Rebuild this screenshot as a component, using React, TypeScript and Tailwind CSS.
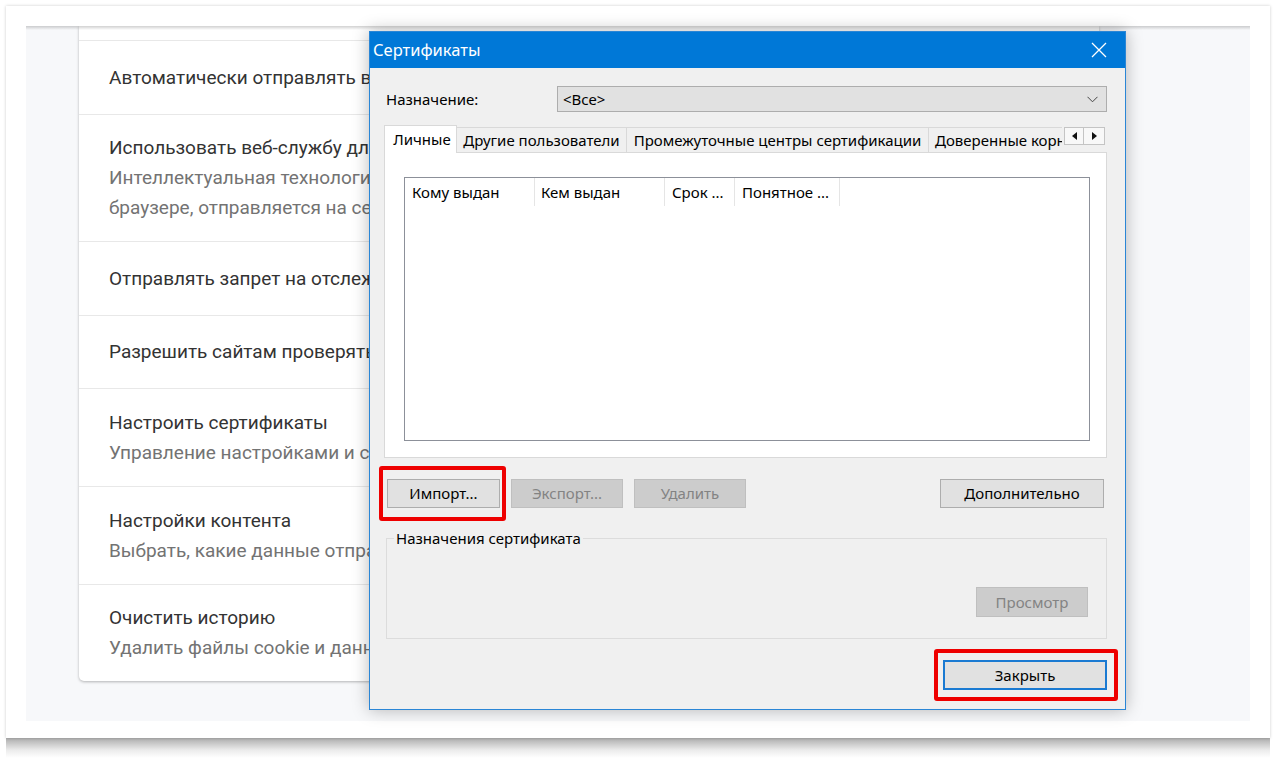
import React from "react";

type Row = { title: string; sub?: string[]; h: string };

const rows: Row[] = [
  { h: "h-[74px]", title: "Автоматически отправлять в Google некоторые системные данные и содержание страниц" },
  {
    h: "h-[127px]",
    title: "Использовать веб-службу для проверки правописания",
    sub: [
      "Интеллектуальная технология проверки правописания, используемая в Google Поиске. Текст, введенный в",
      "браузере, отправляется на серверы Google.",
    ],
  },
  { h: "h-[74px]", title: "Отправлять запрет на отслеживание с исходящим трафиком" },
  { h: "h-[73px]", title: "Разрешить сайтам проверять, сохранены ли в браузере данные о способах оплаты" },
  { h: "h-[98px]", title: "Настроить сертификаты", sub: ["Управление настройками и сертификатами HTTPS/SSL"] },
  {
    h: "h-[98px]",
    title: "Настройки контента",
    sub: ["Выбрать, какие данные отправлять сайтам и какой контент показывать на веб-страницах"],
  },
  { h: "h-[96px]", title: "Очистить историю", sub: ["Удалить файлы cookie и данные сайтов, очистить историю и кеш"] },
];

function SettingsRow({ row, last }: { row: Row; last: boolean }) {
  return (
    <div
      className={`flex ${row.h} flex-col justify-center px-[30px] leading-[30px] ${
        last ? "" : "border-b border-[#e8e8e8]"
      }`}
    >
      <div className="whitespace-nowrap text-[19px] text-[#333333]">{row.title}</div>
      {row.sub?.map((s, i) => (
        <div key={i} className="whitespace-nowrap text-[19px] text-[#737373]">
          {s}
        </div>
      ))}
    </div>
  );
}

function WinButton({
  label,
  width,
  disabled,
  def,
  h = 29,
}: {
  label: string;
  width: string;
  disabled?: boolean;
  def?: boolean;
  h?: number;
}) {
  const base = "flex items-center justify-center text-[15px] leading-none";
  const size = h === 30 ? "h-[30px]" : "h-[29px]";
  if (disabled) {
    return (
      <div className={`${base} ${size} ${width} border border-[#bfbfbf] bg-[#cccccc] text-[#838383]`}>
        {label}
      </div>
    );
  }
  if (def) {
    return (
      <div className={`${base} ${size} ${width} border-2 border-[#1a7ad2] bg-[#e1e1e1] text-black`}>
        {label}
      </div>
    );
  }
  return (
    <div className={`${base} ${size} ${width} border border-[#adadad] bg-[#e1e1e1] text-black`}>{label}</div>
  );
}

function Dialog() {
  return (
    <div className="absolute left-[369px] top-[31px] w-[757px] border border-[#2a86d6] bg-[#f0f0f0] font-['Noto_Sans',sans-serif] shadow-[0_0_16px_rgba(0,0,0,0.28)]">
      {/* title bar */}
      <div className="flex h-[36px] items-center justify-between bg-[#0078d7] pl-[3px] pr-[18px]">
        <span className="text-[16.5px] text-white">Сертификаты</span>
        <svg width="16" height="16" viewBox="0 0 16 16">
          <path d="M1 1 L15 15 M15 1 L1 15" stroke="white" strokeWidth="1.3" fill="none" />
        </svg>
      </div>

      <div className="flex flex-col pl-[14px] pr-[18px] pb-[19px] text-black">
        {/* purpose row */}
        <div className="mt-[18px] flex items-center">
          <div className="w-[173px] pl-[2px] text-[15px]">Назначение:</div>
          <div className="flex h-[26px] flex-1 items-center justify-between border border-[#adadad] bg-[#e1e1e1] pl-[5px] pr-[8px] text-[15px]">
            <span>&lt;Все&gt;</span>
            <svg width="11" height="7" viewBox="0 0 11 7">
              <polyline points="0.5,0.8 5.5,5.8 10.5,0.8" stroke="#444" strokeWidth="1" fill="none" />
            </svg>
          </div>
        </div>

        {/* tabs */}
        <div className="mt-[13px] flex h-[27px] items-end text-[15px]">
          <div className="relative z-10 -mb-px flex h-[28px] w-[73px] items-center justify-center border border-b-0 border-[#d9d9d9] bg-white pl-[3px]">
            Личные
          </div>
          <div className="flex h-[25px] w-[170px] items-center justify-center border-t border-r border-[#d9d9d9] bg-[#f0f0f0]">
            Другие пользователи
          </div>
          <div className="flex h-[25px] w-[302px] items-center justify-center border-t border-r border-[#d9d9d9] bg-[#f0f0f0]">
            Промежуточные центры сертификации
          </div>
          <div className="flex h-[25px] w-[133px] items-center overflow-hidden whitespace-nowrap border-t border-[#d9d9d9] bg-[#f0f0f0] pl-[6px]">
            Доверенные корневые центры сертификации
          </div>
          <div className="mb-[7px] ml-[2px] flex gap-0">
            <div className="flex h-[18px] w-[20px] items-center justify-center border border-[#c4c4c4] bg-[#f8f8f8]">
              <svg width="5" height="8" viewBox="0 0 5 8">
                <polygon points="5,0 5,8 0,4" fill="#111" />
              </svg>
            </div>
            <div className="flex h-[18px] w-[21px] items-center justify-center border border-l-0 border-[#c4c4c4] bg-[#f8f8f8]">
              <svg width="5" height="8" viewBox="0 0 5 8">
                <polygon points="0,0 0,8 5,4" fill="#111" />
              </svg>
            </div>
          </div>
        </div>

        {/* tab pane */}
        <div className="h-[306px] border border-[#d9d9d9] bg-white pl-[19px] pr-[16px] pt-[24px] pb-[16px]">
          <div className="h-full border border-[#8c9099] bg-white">
            <div className="flex h-[28px] items-stretch text-[15px]">
              <div className="flex w-[130px] items-center border-r border-[#e5e5e5] pl-[7px]">Кому выдан</div>
              <div className="flex w-[130px] items-center border-r border-[#e5e5e5] pl-[6px]">Кем выдан</div>
              <div className="flex w-[70px] items-center border-r border-[#e5e5e5] pl-[7px]">Срок ...</div>
              <div className="flex w-[105px] items-center border-r border-[#e5e5e5] pl-[7px]">Понятное ...</div>
            </div>
          </div>
        </div>

        {/* buttons row */}
        <div className="mt-[21px] flex items-center">
          <div className="relative ml-[3px]">
            <WinButton label="Импорт..." width="w-[113px]" />
            <div className="pointer-events-none absolute -left-[8px] -right-[6px] -top-[13px] -bottom-[13px] rounded-[3px] border-4 border-[#ee0000]" />
          </div>
          <div className="ml-[11px]">
            <WinButton label="Экспорт..." width="w-[112px]" disabled />
          </div>
          <div className="ml-[11px]">
            <WinButton label="Удалить" width="w-[112px]" disabled />
          </div>
          <div className="ml-auto mr-[3px]">
            <WinButton label="Дополнительно" width="w-[164px]" />
          </div>
        </div>

        {/* group box */}
        <fieldset className="mt-[20px] ml-[2px] border border-[#dcdcdc] pl-[7px] pr-[18px] pb-[21px]">
          <legend className="px-[2px] text-[15px] leading-[20px]">Назначения сертификата</legend>
          <div className="mt-[39px] flex justify-end">
            <WinButton label="Просмотр" width="w-[112px]" disabled h={30} />
          </div>
        </fieldset>

        {/* close */}
        <div className="mt-[21px] flex justify-end">
          <div className="relative">
            <WinButton label="Закрыть" width="w-[164px]" def h={30} />
            <div className="pointer-events-none absolute -left-[9px] -right-[11px] -top-[11px] -bottom-[11px] rounded-[3px] border-4 border-[#ee0000]" />
          </div>
        </div>
      </div>
    </div>
  );
}

export default function App() {
  return (
    <div className="relative h-[771px] w-[1284px] overflow-hidden bg-white font-['Roboto',sans-serif]">
      <div className="w-[1276px] pl-[6px] pt-[6px]">
        <div className="w-[1264px] bg-white px-[20px] pt-[20px] pb-[17px] shadow-[0_0_3px_rgba(0,0,0,0.2)]">
          <div className="relative h-[695px] overflow-hidden bg-[#f7f8fa] pl-[53px]">
            <div className="pointer-events-none absolute left-0 right-0 top-0 z-10 h-[4px] bg-[linear-gradient(to_bottom,rgba(0,0,0,0.18),rgba(0,0,0,0))]" />
            <div className="w-[1020px] rounded-b-[5px] bg-white shadow-[0_1px_3px_rgba(0,0,0,0.28)]">
              <div className="h-[15px] border-b border-[#e8e8e8]" />
              {rows.map((r, i) => (
                <SettingsRow key={i} row={r} last={i === rows.length - 1} />
              ))}
            </div>
          </div>
        </div>
        <div className="h-[20px] w-[1264px] bg-[linear-gradient(to_bottom,rgba(0,0,0,0.32),rgba(0,0,0,0.08)_60%,rgba(0,0,0,0))]" />
      </div>
      <Dialog />
    </div>
  );
}
